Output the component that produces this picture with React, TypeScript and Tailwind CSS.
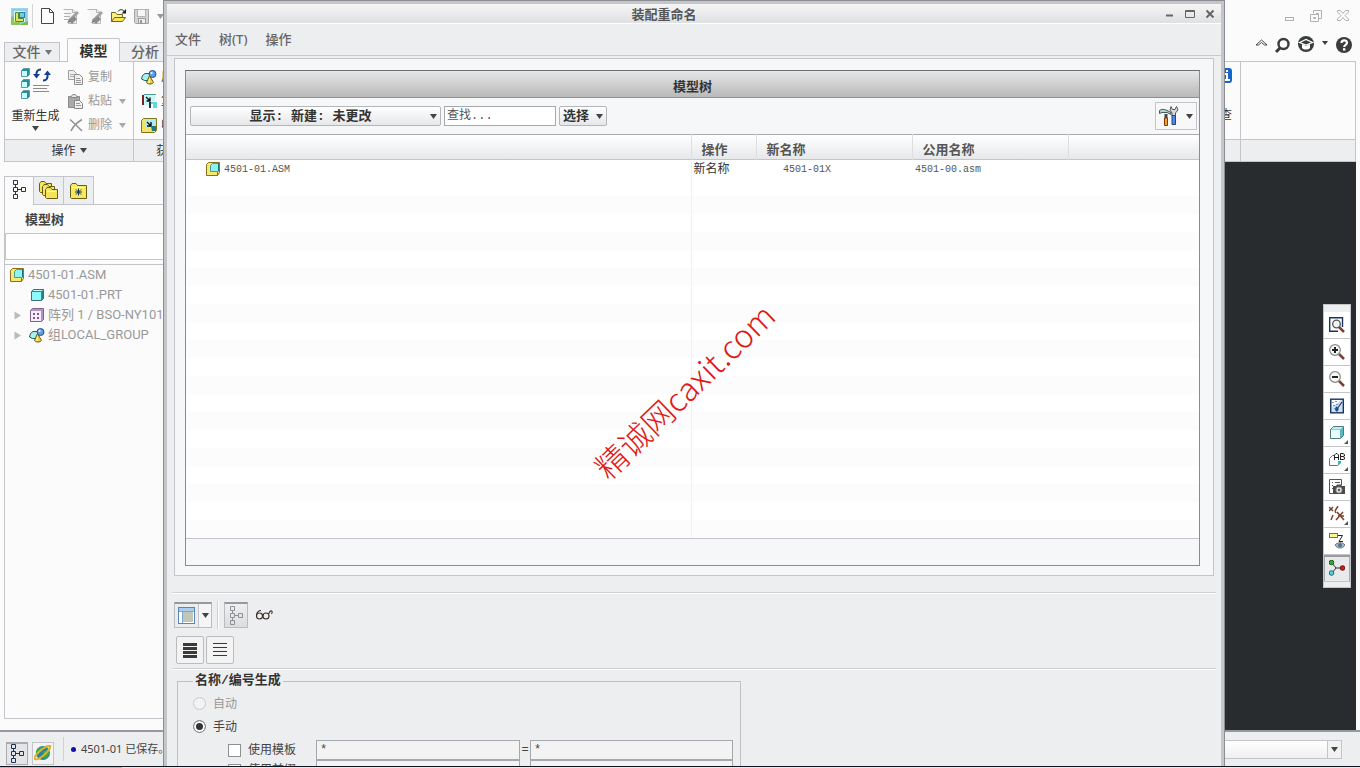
import type { ReactNode } from "react";

const sans = "font-['Noto_Sans','Noto_Sans_CJK_SC',sans-serif]";
const mono = "font-['Liberation_Mono','Noto_Sans_CJK_SC',monospace]";

function Caret({ className = "text-[#444]" }: { className?: string }) {
  return (
    <svg width="7" height="5" viewBox="0 0 7 5" className={`shrink-0 ${className}`}>
      <path d="M0 0H7L3.5 5Z" fill="currentColor" />
    </svg>
  );
}

/* Quick access icons */

function AppIcon() {
  return (
    <svg width="17" height="17" viewBox="0 0 17 17">
      <rect x="0.5" y="0.5" width="16" height="16" fill="#8fcdea" stroke="#9fd3ea" />
      <path d="M0 8V17H17V13L8 17Z" fill="#79bb45" />
      <path d="M0 10L3 8V14H10L7 17H0Z" fill="#8cc653" />
      <rect x="3" y="3" width="11" height="11" fill="#e6f5df" />
      <path d="M4.5 4.5H7.5V10.5H12.5V13.500H4.500Z" fill="#dfe35c" stroke="#4d8a3c" />
      <rect x="8.5" y="4.5" width="5" height="5" fill="#6fd0e4" stroke="#2f7f9c" />
    </svg>
  );
}

function NewIcon() {
  return (
    <svg width="13" height="16" viewBox="0 0 13 16">
      <path d="M0.5 0.5H8.5L12.5 4.5V15.5H0.5Z" fill="#fff" stroke="#444" />
      <path d="M8.5 0.5V4.5H12.5" fill="none" stroke="#444" />
    </svg>
  );
}

function EditDocIcon({ lines }: { lines?: boolean }) {
  return (
    <svg width="16" height="17" viewBox="0 0 16 17">
      <path d="M1.5 1.5H10L13.5 5V15.5H5" fill="#f4f4f4" stroke="#bbb" />
      <path d="M0.5 1.5H9.5V4.5H13.5" fill="none" stroke="#b5b5b5" />
      {lines && <path d="M1 5.5H8M1 8.5H7M1 11.5H5" stroke="#b0b0b0" />}
      <path d="M15 4L6 13" stroke="#a2a2a2" strokeWidth="3" />
      <path d="M5 12L9 16L14 11L11 8Z" fill="#8c8c8c" />
      <path d="M4 15L6 12.5L7.5 14Z" fill="#666" />
    </svg>
  );
}

function OpenIcon() {
  return (
    <svg width="17" height="16" viewBox="0 0 17 16">
      <path d="M1.5 13.5V4.5H5.5L7 6.5H12.5V9" fill="#f8ee8c" stroke="#7a6610" />
      <path d="M1.5 13.5L4.5 9.5H15.5L12.5 13.5Z" fill="#fbe755" stroke="#7a6610" />
      <path d="M8 3.5C9.5 1 13 1 14.5 4" fill="none" stroke="#222" />
      <path d="M16 1V5.5H11.5Z" fill="#222" />
    </svg>
  );
}

function SaveIcon() {
  return (
    <svg width="15" height="15" viewBox="0 0 15 15">
      <path d="M0.5 0.5H14.5V14.5H1.5L0.5 13.5Z" fill="#d4d4d6" stroke="#a5a5a8" />
      <rect x="3.5" y="0.5" width="8" height="7" fill="#f5f5f5" stroke="#b5b5b5" />
      <rect x="4.5" y="9.5" width="7" height="5" fill="#eee" stroke="#9b9b9b" />
      <rect x="6" y="11" width="2" height="3" fill="#999" />
    </svg>
  );
}

/* Ribbon icons */

function RegenerateIcon() {
  return (
    <svg width="30" height="32" viewBox="0 0 30 32">
      {[0, 11, 22].map((y) => (
        <g key={y}>
          <path d={`M0.5 ${y + 2.5}L2.5 ${y + 0.5}H8.5V${y + 6.5}L6.5 ${y + 8.5}H0.5Z`} fill="#2a8f96" stroke="#5f9a9e" />
          <rect x="1" y={y + 3} width="5" height="5" fill="#c4ffff" />
        </g>
      ))}
      <path d="M20 1.5C16 1.5 15 4 15.5 8" fill="none" stroke="#123f96" strokeWidth="2" />
      <path d="M12 6H19L15.5 10.5Z" fill="#123f96" />
      <path d="M22 12.5C26 12.5 27 10 26.5 6" fill="none" stroke="#123f96" strokeWidth="2" />
      <path d="M23 7H30L26.5 2.5Z" fill="#123f96" />
      <path d="M12 17.5H28M12 20.5H26M12 23.5H28" stroke="#8a8a8a" />
    </svg>
  );
}

function CopyIcon() {
  return (
    <svg width="16" height="15" viewBox="0 0 16 15">
      <path d="M0.5 0.5H5.5L8.5 3.5V9.5H0.5Z" fill="#f0f0f0" stroke="#9c9c9c" />
      <path d="M2 4.5H6M2 6.5H7" stroke="#aaa" />
      <path d="M6.5 4.5H11.5L14.5 7.5V14.5H6.5Z" fill="#f0f0f0" stroke="#8f8f8f" />
      <path d="M8 8.5H12M8 10.5H13M8 12.5H13" stroke="#999" />
    </svg>
  );
}

function PasteIcon() {
  return (
    <svg width="16" height="15" viewBox="0 0 16 15">
      <path d="M0.5 2.5H11.5V13.5H0.5Z" fill="#a9a9a9" stroke="#8b8b8b" />
      <path d="M3 3.5C3 -0.5 9 -0.5 9 3.5Z" fill="#e8e8e8" stroke="#888" />
      <path d="M6.5 6.5H11.5L14.5 9.5V14.5H6.5Z" fill="#f0f0f0" stroke="#888" />
      <path d="M8 9.5H12M8 11.5H13" stroke="#999" />
    </svg>
  );
}

function DeleteIcon() {
  return (
    <svg width="16" height="14" viewBox="0 0 16 14">
      <path d="M2 1.5C6 5 10 9 14 13M14 1.5C10 4 5 8 3 13" fill="none" stroke="#949494" strokeWidth="1.6" />
    </svg>
  );
}

function GroupIcon() {
  return (
    <svg width="16" height="15" viewBox="0 0 16 15" className="shrink-0">
      <path d="M1.5 5.5L4 3.5H9.5V10.5H3.5L0.5 9Z" fill="#a8f2ee" stroke="#1f5f62" />
      <circle cx="11.5" cy="4" r="3.5" fill="#5a9be8" stroke="#25508c" />
      <circle cx="10.5" cy="3" r="1.2" fill="#d6e8ff" />
      <path d="M8.5 5.5L12.5 12.5C11 14.5 7 14.5 5.5 12.5Z" fill="#e9d24a" stroke="#6d5a14" />
      <path d="M8.5 7L9 13H7Z" fill="#fdf8b8" />
    </svg>
  );
}

function CopyGeometryIcon() {
  return (
    <svg width="16" height="16" viewBox="0 0 16 16">
      <path d="M2 1H14V8H8V12H2Z" fill="#c9f6f6" />
      <path d="M2 2V12" stroke="#7c2020" strokeWidth="2" />
      <path d="M3 1.5H15" stroke="#4d9b9b" />
      <path d="M5 4L9 8M9 4.5V8H5.5" stroke="#111" strokeWidth="1.4" fill="none" />
      <path d="M8 9H16V15H12V11H8Z" fill="#63d8dc" />
      <path d="M9 9V15" stroke="#123a4a" strokeWidth="2" />
    </svg>
  );
}

function ShrinkwrapIcon() {
  return (
    <svg width="16" height="15" viewBox="0 0 16 15">
      <path d="M0.5 2.5L2.5 0.5H15.5V12.5L13.5 14.5H0.5Z" fill="#f1e26a" stroke="#857418" />
      <rect x="5" y="2" width="9" height="8" fill="#a9eeee" />
      <path d="M6 4L10 8M10 4V8H6" stroke="#111" strokeWidth="1.4" fill="none" />
      <path d="M10 8H15V13H11Z" fill="#1e7b80" />
    </svg>
  );
}

/* Tree icons */

function TreeIcon({ color = "#333" }: { color?: string }) {
  return (
    <svg width="14" height="19" viewBox="0 0 14 19" fill="none" stroke={color}>
      <path d="M1.5 0.5H5.5V4.5H1.5ZM1.5 7.5H5.5V11.5H1.5ZM1.5 14.5H5.5V18.5H1.5ZM9.5 7.5H13.5V11.5H9.5ZM3.5 4.5V7.5M3.5 11.5V14.5M5.5 9.5H9.5" />
    </svg>
  );
}

function FoldersIcon() {
  return (
    <svg width="19" height="19" viewBox="0 0 19 19">
      {[0, 3, 6].map((d) => (
        <g key={d} transform={`translate(${d} ${d})`}>
          <path d="M0.5 10.5V2.5L2 0.5H5.5L7 2.5H12.5V11.5H1.5Z" fill="#f3e45c" stroke="#6a5d12" />
          <path d="M2 4.5H11" stroke="#fffbc4" />
        </g>
      ))}
    </svg>
  );
}

function FavoritesIcon() {
  return (
    <svg width="18" height="16" viewBox="0 0 18 16">
      <path d="M0.5 14.5V2.5L2 0.5H6L7.5 2.5H16.5V15.5H1.5Z" fill="#f5e95f" stroke="#6a5d12" />
      <path d="M2 4.5H15" stroke="#fffbc4" />
      <path d="M8.5 5.5V12.5M5 9H12M6 6.5L11 11.5M11 6.5L6 11.5" stroke="#14305c" />
    </svg>
  );
}

function AssemblyIcon() {
  return (
    <svg width="14" height="14" viewBox="0 0 14 14" className="shrink-0">
      <path d="M0.5 2.5L2.5 0.5H13.5V10.5L11.5 13.5H0.5Z" fill="#f6e973" stroke="#8a7018" />
      <path d="M11.5 13.5V10L13.5 8" stroke="#8a7018" fill="none" />
      <path d="M4.500 3.500L6.500 1.500H13V8L11.500 9.500H4.500Z" fill="#8ef3f0" stroke="#4b9c98" />
      <path d="M12.500 1V9" stroke="#1f7078" />
    </svg>
  );
}

function PartIcon() {
  return (
    <svg width="13" height="12" viewBox="0 0 13 12" className="shrink-0">
      <path d="M0.5 2.5L2.5 0.5H12.5V9.5L10.5 11.5H0.5Z" fill="#2b8a8c" stroke="#3f6e70" />
      <path d="M1 3H10V11H1Z" fill="#8ffafa" />
      <path d="M1.5 2L3 1H12L10.5 2Z" fill="#c8ffff" />
    </svg>
  );
}

function PatternIcon() {
  return (
    <svg width="14" height="14" viewBox="0 0 14 14" className="shrink-0">
      <path d="M0.5 2.5L2.5 0.5H13.5V11.5L11.5 13.5H0.5Z" fill="#b193c4" stroke="#7d6589" />
      <rect x="1" y="3" width="10" height="10" fill="#f6ecfb" />
      <path d="M3 5H5V7H3ZM7 5H9V7H7ZM3 9H5V11H3ZM7 9H9V11H7Z" fill="#7a5c8c" />
    </svg>
  );
}

function Expander() {
  return (
    <svg width="8" height="9" viewBox="0 0 8 9">
      <path d="M0.5 0.5V8.5L7 4.5Z" fill="#bbb" />
    </svg>
  );
}

/* View toolbar icons */

function Magnifier({ children }: { children?: ReactNode }) {
  return (
    <>
      <path d="M10 10L15 15" stroke="#7b4038" strokeWidth="2.5" />
      <circle cx="6" cy="6" r="5.3" fill="#f7f7f7" stroke="#888" strokeWidth="1.2" />
      {children}
    </>
  );
}

const viewTools: { label: string; icon: ReactNode; menu?: boolean; active?: boolean }[] = [
  {
    label: "重新调整",
    icon: (
      <>
        <path d="M13.5 10V0.7H0.7V14.3H9" fill="#fff" stroke="#17375e" strokeWidth="1.4" />
        <path d="M10 10L15 15" stroke="#7b4038" strokeWidth="2.5" />
        <circle cx="7.5" cy="7" r="3.8" fill="#eef3f3" stroke="#555" strokeWidth="1.3" />
      </>
    ),
  },
  {
    label: "放大",
    icon: (
      <Magnifier>
        <path d="M6 3V9M3 6H9" stroke="#222" strokeWidth="2" />
      </Magnifier>
    ),
  },
  {
    label: "缩小",
    icon: (
      <Magnifier>
        <path d="M3 6H9" stroke="#222" strokeWidth="2" />
      </Magnifier>
    ),
  },
  {
    label: "重画",
    icon: (
      <>
        <rect x="1.700" y="1.200" width="12.600" height="13.600" fill="#cfe0f6" stroke="#17375e" strokeWidth="1.400" />
        <path d="M3 2H12L3 9Z" fill="#fff" />
        <path d="M13 4L8 11" stroke="#17375e" strokeWidth="1.200" />
        <path d="M3 4.500H5M6 3.500H8M4 7.500H6M7 6.500H9M5 10.500H7" stroke="#6b93c8" />
        <path d="M7 8L10 11L8 14L6 12Z" fill="#274b7c" />
      </>
    ),
  },
  {
    label: "显示样式",
    menu: true,
    icon: (
      <>
        <path d="M1.5 4.5L4.5 1.5H14.5V10.5L11.5 13.5H1.5Z" fill="#55b8bb" stroke="#58777a" />
        <path d="M2 5H11V13H2Z" fill="#e9ffff" />
        <path d="M2 4.5L4.5 2H14L11.5 4.5Z" fill="#b8f1f1" />
      </>
    ),
  },
  {
    label: "已命名视图",
    menu: true,
    icon: (
      <>
        <path d="M5 3.5H3.5L0.5 6.5V13.5H8.5L11.5 11V9" fill="#fff" stroke="#4b8286" />
        <path d="M9 9H12V11L9 13Z" fill="#35b8bb" />
        <path d="M5.5 8V3L7 1.500H8L9.5 3V8M5.5 5.500H9.5M11.5 8V1.5H14L15.500 2.5V4L14 4.5H11.5M14 4.5L15.500 5.5V7L14 7.5H11.5" fill="none" stroke="#222" />
      </>
    ),
  },
  {
    label: "视图管理器",
    icon: (
      <>
        <path d="M0.5 0.5H12.5V6M0.5 0.5V14.5H4" fill="none" stroke="#555" />
        <path d="M3 3.5H4M6 3.5H11M3 6.5H4M3 9.5H4" stroke="#555" />
        <path d="M4 7H7L8 5.5H12L13 7H16V15H4Z" fill="#4b4b4b" />
        <circle cx="10" cy="11" r="3" fill="#e6e6e6" stroke="#999" />
        <circle cx="10" cy="11" r="1.2" fill="#555" />
      </>
    ),
  },
  {
    label: "基准显示",
    menu: true,
    icon: (
      <g stroke="#7a4330" strokeWidth="1.5">
        <path d="M0 1L4 5M4 1L0 5M9 0L6 5M4 9L2 14M6 5L7 7" />
        <path d="M7 14L14 6M8 6L15 14M9 10H15" />
      </g>
    ),
  },
  {
    label: "注释显示",
    icon: (
      <>
        <rect x="0.5" y="0.5" width="8" height="4" fill="#fdf6a0" stroke="#857418" />
        <path d="M9 2.500H13.500L10 8.5H14" fill="none" stroke="#222" />
        <path d="M6 12C8 9 14 9 16 12C14 16 8 16 6 12Z" fill="#a9b8c4" stroke="#777" />
        <circle cx="11" cy="12.3" r="2" fill="#4f7391" />
      </>
    ),
  },
  {
    label: "旋转中心",
    active: true,
    icon: (
      <>
        <path d="M3 3L7 8L3 13M7 8H13" fill="none" stroke="#333" />
        <circle cx="2.5" cy="2.5" r="2.3" fill="#37a837" stroke="#1b5f1b" />
        <circle cx="2.5" cy="13" r="2.3" fill="#4fd3dc" stroke="#1d6d78" />
        <circle cx="13.5" cy="8" r="2.3" fill="#c81e1e" stroke="#701010" />
      </>
    ),
  },
];

function ViewToolbar() {
  return (
    <div className="flex flex-col border border-[#c3c5ca] bg-[#edeef0] pt-[7px] pb-[5px]">
      {viewTools.map((tool) => (
        <button
          key={tool.label}
          aria-label={tool.label}
          className={`relative flex h-[27px] w-[26px] items-center justify-center border-b border-[#c3c5ca] ${
            tool.active ? "bg-[#e8e9eb] shadow-[inset_0_2px_0_#9a9b9e,inset_1px_0_0_#aaa,inset_-1px_0_0_#aaa]" : "bg-white"
          }`}
        >
          <svg width="16" height="16" viewBox="0 0 16 16">
            {tool.icon}
          </svg>
          {tool.menu && (
            <svg width="4" height="4" viewBox="0 0 4 4" className="absolute right-[2px] bottom-[2px]">
              <path d="M4 0V4H0Z" fill="#555" />
            </svg>
          )}
        </button>
      ))}
    </div>
  );
}

/* Background application */

function QuickAccessBar() {
  return (
    <div className="flex h-8 items-center justify-between pr-[10px] pl-[11px]">
      <div className="flex items-center">
        <AppIcon />
        <span className="mr-2 ml-1 h-6 w-px bg-[#d4d5d8]" />
        <div className="flex items-center gap-2">
          <button aria-label="新建"><NewIcon /></button>
          <button aria-label="编辑" className="ml-px"><EditDocIcon lines /></button>
          <button aria-label="修改"><EditDocIcon /></button>
          <button aria-label="打开" className="-ml-px"><OpenIcon /></button>
          <button aria-label="保存" className="-ml-px"><SaveIcon /></button>
          <Caret className="text-[#999]" />
        </div>
      </div>
      <svg width="66" height="14" viewBox="0 0 66 14" fill="none" stroke="#aeb0b3">
        <rect x="1.5" y="8.5" width="8" height="3" />
        <path d="M29.5 4.5V1.5H37.5V9.5H34.5M26.5 5.5H34.5V12.5H26.5ZM29.5 8.5H31.5V9.5H29.5ZM32 4.5H34.5V6" />
        <path d="M53.500 1.500H56.500L59 4.500L61.500 1.500H64.500V3L61 6.500L64.500 10V11.500H61.500L59 8.500L56.500 11.500H53.500V10L57 6.500L53.500 3Z" />
      </svg>
    </div>
  );
}

function TabRow() {
  return (
    <div className="flex h-[29px] justify-between pr-2 pl-1">
      <div className="flex items-end text-sm">
        <button className="flex h-[19px] w-[56px] items-center justify-center gap-1 border border-b-0 border-[#c3c5ca] bg-[#edeef0] font-medium text-[#666]">
          文件
          <Caret className="text-[#777]" />
        </button>
        <button className="relative z-10 -mb-px ml-[7px] h-6 w-[53px] rounded-t-xs border border-b-0 border-[#c3c5ca] bg-[#fbfbfb] font-bold text-[#333]">
          模型
        </button>
        <button className="h-[19px] w-[60px] border-t border-r border-[#c3c5ca] bg-[#edeef0] pl-[11px] text-left leading-4 font-medium text-[#666]">
          分析
        </button>
      </div>
      <svg width="98" height="26" viewBox="0 0 98 26">
        <path d="M2 13L7.500 8L13 13H10.500L7.500 10.500L4.500 13Z" fill="#fff" stroke="#444" />
        <circle cx="29.500" cy="12" r="5" fill="none" stroke="#3a3c3e" strokeWidth="2.400" />
        <path d="M26 16L22 20" stroke="#3a3c3e" strokeWidth="3" />
        <circle cx="52" cy="12" r="8" fill="#3a3c3e" />
        <path d="M45.500 10.500L52 7.500L58.500 10.500L52 13Z" fill="none" stroke="#fff" strokeWidth="1.200" />
        <path d="M48 12V16C50 18 54 18 56 16V12L52 14Z" fill="#fff" />
        <path d="M68 9H74L71 13Z" fill="#3a3c3e" />
        <circle cx="90" cy="13" r="8" fill="#3a3c3e" />
        <path d="M87.500 11C87.500 7.500 93 7.500 93 10.800C93 13 90.200 12.800 90.200 15" fill="none" stroke="#fff" strokeWidth="2.200" />
        <rect x="89" y="16.200" width="2.400" height="2.400" fill="#fff" />
      </svg>
    </div>
  );
}

const clipboard = [
  { label: "复制", icon: <CopyIcon /> },
  { label: "粘贴", icon: <PasteIcon />, menu: true },
  { label: "删除", icon: <DeleteIcon />, menu: true },
];

const getData = [
  { label: "用", icon: <GroupIcon /> },
  { label: "复", icon: <CopyGeometryIcon /> },
  { label: "收", icon: <ShrinkwrapIcon /> },
];

function Ribbon() {
  return (
    <div className="mx-1 flex h-[101px] border border-[#c3c5ca] text-xs text-[#333]">
      <div className="flex w-[129px] flex-col border-r border-[#c3c5ca]">
        <div className="flex flex-1">
          <button className="flex w-[61px] flex-col items-center pt-[6px]">
            <RegenerateIcon />
            <span className="mt-[6px] leading-5">重新生成</span>
            <Caret />
          </button>
          <div className="flex flex-col pt-[3px] pl-[2px]">
            {clipboard.map((item) => (
              <button key={item.label} className="flex h-6 items-center gap-1 text-[#999]">
                {item.icon}
                {item.label}
                {item.menu && <Caret className="ml-[3px] text-[#aaa]" />}
              </button>
            ))}
          </div>
        </div>
        <div className="flex h-[22px] items-center justify-center gap-1 border-t border-[#c3c5ca] bg-[#edeef0]">
          操作
          <Caret />
        </div>
      </div>
      <div className="flex flex-1 flex-col border-r border-[#c3c5ca]">
        <div className="flex flex-1 justify-between">
          <div className="flex flex-col pt-[3px] pl-[7px]">
            {getData.map((item) => (
              <button key={item.label} className="flex h-6 items-center gap-1">
                {item.icon}
                {item.label}
              </button>
            ))}
          </div>
          <div className="flex flex-col items-end pt-[6px] pr-2">
            <svg width="14" height="15" viewBox="0 0 14 15">
              <rect width="14" height="15" rx="3" fill="#1765c8" />
              <path d="M9 2V4M6 6H9V12M6 12H12" stroke="#fff" strokeWidth="2" fill="none" />
            </svg>
            <span className="mt-[22px] leading-5">查</span>
          </div>
        </div>
        <div className="flex h-[22px] items-center border-t border-[#c3c5ca] bg-[#edeef0] pl-[22px]">获</div>
      </div>
      <div className="flex w-[114px] flex-col">
        <div className="flex-1" />
        <div className="h-[22px] border-t border-[#c3c5ca] bg-[#edeef0]" />
      </div>
    </div>
  );
}

const modelTree = [
  { label: "4501-01.ASM", icon: <AssemblyIcon />, indent: "pl-[5px]" },
  { label: "4501-01.PRT", icon: <PartIcon />, indent: "pl-[25px]" },
  { label: "阵列 1 / BSO-NY101", icon: <PatternIcon />, indent: "pl-[9px]", expandable: true },
  { label: "组LOCAL_GROUP", icon: <GroupIcon />, indent: "pl-[9px]", expandable: true },
];

function Sidebar() {
  return (
    <aside className="flex w-1/4 flex-col pt-[14px] pb-[11px] pl-1">
      <div className="flex h-7">
        <button aria-label="模型树" className="relative z-10 -mb-px flex w-[30px] items-center justify-center border border-b-0 border-[#c3c5ca] bg-[#fbfbfb] pb-1">
          <TreeIcon />
        </button>
        <button aria-label="文件夹浏览器" className="flex w-[30px] items-center justify-center border-t border-r border-[#c3c5ca] bg-[#edeef0]">
          <FoldersIcon />
        </button>
        <button aria-label="收藏夹" className="flex w-[30px] items-center justify-center border-t border-r border-[#c3c5ca] bg-[#edeef0]">
          <FavoritesIcon />
        </button>
      </div>
      <div className="flex flex-1 flex-col border border-[#c3c5ca]">
        <h2 className="h-7 pl-5 text-[13px] leading-7 font-bold text-[#444]">模型树</h2>
        <input aria-label="过滤" className="h-[27px] border border-[#c3c5ca] bg-white" />
        <ul className="mt-1 flex-1 border-t border-[#c3c5ca] text-[13px] text-[#999] font-['Roboto','Noto_Sans_CJK_SC',sans-serif]">
          {modelTree.map((node) => (
            <li key={node.label} className={`flex h-5 items-center gap-1 whitespace-nowrap ${node.indent}`}>
              {node.expandable && <span className="mr-1"><Expander /></span>}
              <span className="flex w-[14px] shrink-0 justify-center">{node.icon}</span>
              {node.label}
            </li>
          ))}
        </ul>
      </div>
    </aside>
  );
}

function StatusBar() {
  return (
    <footer className="flex h-9 items-center justify-between border-t-2 border-[#97989b] bg-[#edeef0] pr-[18px] pl-[6px]">
      <div className="flex items-center text-[11px] text-[#444]">
        <button aria-label="导航器" className="mt-2 flex h-[23px] w-[22px] items-center justify-center border border-t-2 border-[#aaabae] bg-[#e4e5e8]">
          <TreeIcon color="#1c3552" />
        </button>
        <button aria-label="浏览器" className="mt-2 ml-1 flex h-[23px] w-[22px] items-center justify-center border border-[#c3c5ca] bg-[#f3f3f5]">
          <svg width="18" height="18" viewBox="0 0 18 18">
            <circle cx="9" cy="9" r="7" fill="#2d7fa5" />
            <path d="M4 4C7 2 9 4 8 7L5 9L3 13C1 9 2 6 4 4ZM10 7L15 6C16 10 14 14 11 15L8 12Z" fill="#46a53c" />
            <path d="M1 15C-1 12 11 1 16 2C18 4 6 17 1 15Z" fill="none" stroke="#d9b429" strokeWidth="2" />
          </svg>
        </button>
        <span className="mr-[7px] ml-[9px] h-6 w-px bg-[#d0d1d4]" />
        <span className="mr-[5px] size-[5px] rounded-full bg-[#1010b4]" />
        <span>4501-01 已保存。</span>
      </div>
      <div className="relative w-1/4">
        <select aria-label="过滤器" className="block h-[19px] w-full appearance-none border border-[#c3c5ca] bg-linear-to-b from-white to-[#f0f0f1]" />
        <span className="pointer-events-none absolute inset-y-0 right-0 flex w-[15px] items-center justify-center border border-[#c3c5ca] bg-[#f2f2f3]">
          <Caret />
        </span>
      </div>
    </footer>
  );
}

/* Rename dialog */

const filler = Array.from({ length: 20 }, (_, i) => i);

function ModelTreePanel() {
  return (
    <section className="border border-[#8b8c8f] border-t-[#6d6e71] bg-[#f6f7f9]">
      <h2 className="h-[27px] border-b border-[#8f9093] bg-linear-to-b from-[#e6e6e6] to-[#b9b9b9] text-center text-[13px] leading-[30px] font-bold text-[#333]">
        模型树
      </h2>
      <div className="flex h-9 items-center justify-between pr-[2px] pl-1">
        <div className={`flex items-center gap-[3px] text-[13px] text-[#333] ${mono}`}>
          <button className="flex h-5 w-[251px] items-center rounded-xs border border-[#b5b6b9] bg-linear-to-b from-white to-[#e6e7e9] pr-[3px] font-bold">
            <span className="flex-1 pt-px text-center">显示: 新建: 未更改</span>
            <Caret />
          </button>
          <input aria-label="查找" placeholder="查找..." className="h-5 w-[112px] border border-[#a7a8ab] bg-white px-[2px] text-xs placeholder:text-[#555]" />
          <button className="flex h-5 w-12 items-center justify-between rounded-xs border border-[#b5b6b9] bg-linear-to-b from-white to-[#e6e7e9] px-[3px] font-bold">
            <span className="pt-px">选择</span>
            <Caret />
          </button>
        </div>
        <button aria-label="设置" className="flex h-7 w-[42px] items-center justify-between border border-[#c3c5ca] bg-[#f8f8f9] px-[3px]">
          <svg width="20" height="20" viewBox="0 0 20 20">
            <path d="M0.500 7.500V4.500C3 2.500 5 3.500 7 4L12 6.500V8.500L8 6.500H3Z" fill="#b8d4d2" stroke="#3e5a58" />
            <path d="M5.500 8V14H8.500V8Z" fill="#444" />
            <path d="M5.500 12H8.500V19.500H5.500Z" fill="#f0a02a" stroke="#8a3510" />
            <path d="M12 0.500L13.500 3.500H16L17.500 0.500L19 4L16.500 7V10H13V7L11 4Z" fill="#d8d8d8" stroke="#555" />
            <path d="M13 9.500H16.500V18.500H13Z" fill="#4f8be0" stroke="#1f4588" />
          </svg>
          <Caret />
        </button>
      </div>
      <table className="w-full table-fixed border-collapse border-t border-[#a9aaad] bg-white text-left text-[#333]">
        <colgroup>
          <col />
          <col className="w-[65px]" />
          <col className="w-[156px]" />
          <col className="w-[156px]" />
          <col className="w-[131px]" />
        </colgroup>
        <thead className="bg-linear-to-b from-white to-[#e6e7e9] text-[13px] leading-5">
          <tr className="h-[25px] border-b border-[#c3c5ca]">
            <th className="p-0" aria-label="名称" />
            <th className="border-l border-[#dddee0] p-0 pt-1 pl-[10px] font-bold text-[#555]">操作</th>
            <th className="border-l border-[#dddee0] p-0 pt-1 pl-[10px] font-bold text-[#555]">新名称</th>
            <th className="border-l border-[#dddee0] p-0 pt-1 pl-[10px] font-bold text-[#555]">公用名称</th>
            <th className="border-l border-[#dddee0] p-0" aria-label="其他" />
          </tr>
        </thead>
        <tbody className={`text-[10px] leading-4 text-[#555] ${mono}`}>
          <tr className="h-[18px]">
            <td className="p-0 pl-5">
              <span className="flex h-[18px] items-center gap-1">
                <AssemblyIcon />
                <span className="pt-[2px]">4501-01.ASM</span>
              </span>
            </td>
            <td className="border-l border-[#f1f1f2] p-0 pt-[2px] pl-[2px] text-xs leading-4 text-[#333]">新名称</td>
            <td className="p-0 pt-[2px] pl-[27px]">4501-01X</td>
            <td className="p-0 pt-[2px] pl-[3px]">4501-00.asm</td>
            <td className="p-0" />
          </tr>
          {filler.map((i) => (
            <tr key={i} className="h-[18px] odd:bg-[#fcfcfc]">
              <td className="p-0" />
              <td className="border-l border-[#f1f1f2] p-0" />
              <td className="p-0" colSpan={3} />
            </tr>
          ))}
        </tbody>
      </table>
      <div className="h-[27px] border-t border-[#c3c5ca]" />
    </section>
  );
}

function DialogToolbar() {
  return (
    <div className="mx-[5px] mt-4 border-y border-[#d0d2d5] shadow-[inset_0_1px_0_#fff,0_1px_0_#fff]">
      <div className="flex items-center px-[2px] pt-2">
        <button aria-label="显示列" className="flex h-[26px] w-[38px] items-center border border-t-2 border-[#bbbcc0] border-t-[#98999c] bg-[#ececef]">
          <svg width="17" height="17" viewBox="0 0 17 17" className="mx-[3px] shrink-0">
            <rect x="0.500" y="0.500" width="16" height="16" fill="#fff" stroke="#5a86b4" />
            <rect x="1" y="1" width="15" height="3" fill="#a9cdf0" />
            <path d="M4.500 4V16M1 4.500H16" stroke="#7fa6cc" />
            <rect x="5" y="5" width="10" height="10" fill="#c3c6b4" />
          </svg>
          <span className="flex h-full flex-1 items-center justify-center border-l border-[#c3c5ca] bg-[#f5f5f6]">
            <Caret />
          </span>
        </button>
        <span className="mx-[5px] h-7 w-[2px] border-l border-[#d0d2d5] bg-white" />
        <button aria-label="模型树" className="flex h-[26px] w-6 items-center justify-center border border-t-2 border-[#bbbcc0] border-t-[#98999c] bg-linear-to-b from-[#efeff1] to-[#dcdde0]">
          <TreeIcon color="#909194" />
        </button>
        <button aria-label="预览" className="ml-2">
          <svg width="17" height="10" viewBox="0 0 17 10" fill="none" stroke="#3f2b28" strokeWidth="1.100">
            <circle cx="3.500" cy="6" r="3" />
            <circle cx="10" cy="6" r="3" />
            <path d="M0.500 5C1 2.500 2.500 0.500 5 0.500M6 5C6.500 4 7 4 7.500 5M12.500 4L14 1.500C15.500 0 17 1.500 15.500 4" />
          </svg>
        </button>
      </div>
      <div className="flex gap-[2px] px-1 pt-[7px] pb-1">
        <button aria-label="全选" className="flex size-7 items-center justify-center rounded-xs border border-[#bbbcc0] bg-[#f3f3f4]">
          <svg width="14" height="15" viewBox="0 0 14 15">
            <path d="M0 0H14V3H0ZM0 4H14V7H0ZM0 8H14V11H0ZM0 12H14V15H0Z" fill="#3a3a3a" />
          </svg>
        </button>
        <button aria-label="取消全选" className="flex size-7 items-center justify-center rounded-xs border border-[#bbbcc0] bg-[#f3f3f4]">
          <svg width="14" height="14" viewBox="0 0 14 14">
            <path d="M0 0.500H14M0 4.500H14M0 8.500H14M0 12.500H14" stroke="#3a3a3a" />
          </svg>
        </button>
      </div>
    </div>
  );
}

function TemplateRow({ id, label, value }: { id: string; label: string; value?: string }) {
  return (
    <div className="flex h-5 items-center">
      <label className="flex w-[88px] items-center gap-[7px]">
        <input type="checkbox" className="size-[13px] appearance-none border border-[#8f9093] bg-white" />
        {label}
      </label>
      <input aria-label={`${id}-from`} defaultValue={value} className={`h-5 w-[204px] border border-[#a7a8ab] bg-[#f3f3f3] px-[3px] ${mono}`} />
      <span className={`w-[10px] text-center ${mono}`}>{value && "="}</span>
      <input aria-label={`${id}-to`} defaultValue={value} className={`h-5 w-[203px] border border-[#a7a8ab] bg-[#f3f3f3] px-[3px] ${mono}`} />
    </div>
  );
}

function NameGeneration() {
  return (
    <fieldset className="mt-px ml-[10px] w-[564px] border border-[#bfc0c3] pr-[7px] pb-3 pl-[15px] text-xs text-[#444]">
      <legend className={`h-[22px] px-[2px] text-[13px] leading-[22px] font-bold text-[#333] ${mono}`}>名称/编号生成</legend>
      <label className="flex h-[23px] items-center gap-[7px] text-[#999]">
        <input type="radio" name="mode" disabled className="size-[13px] appearance-none rounded-full border border-[#c8c9cb] bg-[#f3f3f3]" />
        自动
      </label>
      <label className="flex h-[23px] items-center gap-[7px]">
        <input type="radio" name="mode" defaultChecked className="size-[13px] appearance-none rounded-full border border-[#8f9093] bg-[#333] shadow-[inset_0_0_0_2px_#fff]" />
        手动
      </label>
      <div className="pt-[2px] pl-[35px]">
        <TemplateRow id="template" label="使用模板" value="*" />
        <TemplateRow id="prefix" label="使用前缀" />
      </div>
    </fieldset>
  );
}

function RenameDialog() {
  return (
    <div
      role="dialog"
      aria-label="装配重命名"
      className="absolute top-0 right-[135px] bottom-[2px] left-[163px] z-20 overflow-hidden border border-b-0 border-[#8b8d92] bg-[#c4c6ca] p-[3px] pb-0"
    >
      <div className="min-h-full bg-[#edeef0]">
        <div className="flex h-5 items-center border-b border-white bg-linear-to-b from-[#f6f6f7] to-[#dfe0e2]">
          <h1 className="flex-1 text-center text-[13px] leading-[18px] font-bold text-[#555]">装配重命名</h1>
          <div className="flex w-[60px] justify-end pr-[6px]">
            <svg width="50" height="10" viewBox="0 0 50 10">
              <path d="M1 6.500H8" stroke="#666" strokeWidth="2" />
              <path d="M20.500 1.500H29.500V8.500H20.500ZM20 2.500H30" fill="none" stroke="#666" />
              <path d="M41.500 1.500L48.500 8.500M48.500 1.500L41.500 8.500" stroke="#666" strokeWidth="2" />
            </svg>
          </div>
        </div>
        <nav className="flex h-8 items-center gap-[18px] border-b border-[#c8cace] pt-px pl-2 text-[13px] font-medium text-[#666]">
          <button>文件</button>
          <button>树(T)</button>
          <button>操作</button>
        </nav>
        <div className="mx-[7px] mt-[2px] border border-[#c3c5ca] bg-[#f6f7f9] pt-[11px] pr-[13px] pb-[9px] pl-[10px]">
          <ModelTreePanel />
        </div>
        <DialogToolbar />
        <NameGeneration />
      </div>
      <div className="pointer-events-none absolute top-[365px] left-[402px] -rotate-[44deg] text-[32px] leading-[48px] font-light whitespace-nowrap text-[#e01818] font-['Noto_Sans_CJK_SC',sans-serif]">
        精诚网caxit.com
      </div>
    </div>
  );
}

export default function App() {
  return (
    <div className={`relative flex h-screen min-h-[640px] flex-col overflow-hidden bg-[#fbfbfb] text-xs ${sans}`}>
      <QuickAccessBar />
      <TabRow />
      <Ribbon />
      <main className="flex flex-1">
        <Sidebar />
        <div className="mr-1 flex flex-1 items-center justify-end bg-[#282c2e] pr-[5px]">
          <ViewToolbar />
        </div>
      </main>
      <StatusBar />
      <RenameDialog />
      {/* top edge of the desktop taskbar */}
      <div className="flex h-[2px] border-t border-[#10131c] bg-[#e4ebf4]">
        <span className="w-[122px] bg-[#a9bdd6]" />
      </div>
    </div>
  );
}
